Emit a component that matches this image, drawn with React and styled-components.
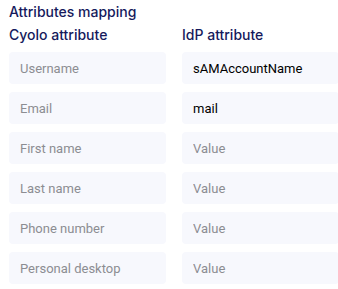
import React from "react";
import styled, { createGlobalStyle } from "styled-components";

const GlobalStyle = createGlobalStyle`
  body {
    margin: 0;
    background: #ffffff;
    overflow: hidden;
  }
`;

const rows = [
  { label: "Username", value: "sAMAccountName" },
  { label: "Email", value: "mail" },
  { label: "First name", value: "" },
  { label: "Last name", value: "" },
  { label: "Phone number", value: "" },
  { label: "Personal desktop", value: "" },
];

function App() {
  return (
    <Panel>
      <GlobalStyle />
      <Title>Attributes mapping</Title>
      <Grid>
        <ColumnHead>Cyolo attribute</ColumnHead>
        <ColumnHead>IdP attribute</ColumnHead>
        {rows.map((row) => (
          <React.Fragment key={row.label}>
            <Field placeholder={row.label} readOnly />
            <Field placeholder="Value" defaultValue={row.value} />
          </React.Fragment>
        ))}
      </Grid>
    </Panel>
  );
}

export default App;

const Panel = styled.div`
  padding: 3px 0 0 9px;
  width: 340px;
  font-family: Inter, "Noto Sans", sans-serif;
`;

const Title = styled.div`
  font-size: 14px;
  font-weight: 500;
  color: #161a5c;
  line-height: 18px;
`;

const Grid = styled.div`
  display: grid;
  grid-template-columns: 157px 157px;
  column-gap: 16px;
  row-gap: 8px;
  margin-top: 5px;
`;

const ColumnHead = styled.div`
  font-size: 14px;
  font-weight: 500;
  color: #161a5c;
  line-height: 18px;
`;

const Field = styled.input`
  box-sizing: border-box;
  height: 32px;
  width: 100%;
  border: none;
  border-radius: 4px;
  background: #f7f8fd;
  padding: 0 11px;
  font-family: Roboto, "Liberation Sans", sans-serif;
  font-size: 13px;
  color: #000000;
  outline: none;

  &::placeholder {
    color: #8c8d92;
  }
`;
